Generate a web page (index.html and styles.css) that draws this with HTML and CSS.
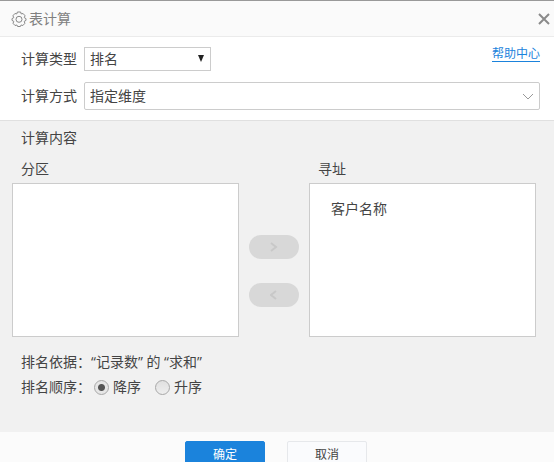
FILE: index.html
```html
<!DOCTYPE html>
<html lang="zh-CN">
<head>
  <meta charset="UTF-8" />
  <meta name="viewport" content="width=device-width, initial-scale=1" />
  <title>表计算</title>
  <link rel="stylesheet" href="styles.css">
</head>
<body>
  <form class="dialog">
    <header class="header">
      <svg class="gear" viewBox="0 0 16 16" width="16" height="16">
        <path d="M6.4 1h3.2l.6 1.9 1.9-.4 2 2.3-.9 1.8 1.8 1v1.8l-1.8 1 .7 1.9-2 2.2-1.8-.5-.7 1.5H6.6L5.9 14l-1.900.5-2-2.200.8-1.900-1.800-1V7.600l1.800-1-.900-1.800 2-2.300 1.900.400z" />
        <circle cx="8" cy="8.300" r="3" />
      </svg>
      <h1 class="title">表计算</h1>
      <button type="button" class="close" aria-label="关闭">
        <svg viewBox="0 0 12 12" width="12" height="12"><path d="M1 1l10 10M11 1L1 11" /></svg>
      </button>
    </header>

    <section class="settings">
      <div class="row">
        <label for="calcType">计算类型</label>
        <div class="select type">
          <select id="calcType">
            <option>排名</option>
          </select>
          <svg class="arrow" viewBox="0 0 6 7" width="6" height="7"><path d="M0 0h6L3 7z" /></svg>
        </div>
        <a class="help" href="#">帮助中心</a>
      </div>
      <div class="row">
        <label for="calcMode">计算方式</label>
        <div class="select mode">
          <select id="calcMode">
            <option>指定维度</option>
          </select>
          <svg class="chevron" viewBox="0 0 12 8" width="12" height="8"><path d="M1 1l5 5 5-5" /></svg>
        </div>
      </div>
    </section>

    <section class="content">
      <h2 class="subtitle">计算内容</h2>
      <div class="transfer">
        <div class="panel">
          <h3 class="panel-title">分区</h3>
          <ul class="list"></ul>
        </div>
        <div class="moves">
          <button type="button" class="move" disabled aria-label="右移">
            <svg viewBox="0 0 8 10" width="8" height="10"><path d="M1 1l5 4-5 4" /></svg>
          </button>
          <button type="button" class="move" disabled aria-label="左移">
            <svg viewBox="0 0 8 10" width="8" height="10"><path d="M6 1L1 5l5 4" /></svg>
          </button>
        </div>
        <div class="panel">
          <h3 class="panel-title">寻址</h3>
          <ul class="list">
            <li>客户名称</li>
          </ul>
        </div>
      </div>
      <div class="rank">
        <p class="rank-row">排名依据：“记录数” 的 “求和”</p>
        <div class="rank-row" role="radiogroup" aria-label="排名顺序">
          <span class="rank-label">排名顺序：</span>
          <label class="radio"><input type="radio" name="order" checked>降序</label>
          <label class="radio"><input type="radio" name="order">升序</label>
        </div>
      </div>
    </section>

    <footer class="footer">
      <button type="submit" class="btn primary">确定</button>
      <button type="button" class="btn">取消</button>
    </footer>
  </form>
</body>
</html>
```

FILE: styles.css
```css
* {
  box-sizing: border-box;
}
body {
  margin: 0;
  height: 100vh;
  overflow: hidden;
  background: #fbfbfb;
  color: #444;
  font-family: "Open Sans", "Noto Sans CJK SC", sans-serif;
  font-size: 14px;
  line-height: 20px;
}
h1, h2, h3, p, ul {
  margin: 0;
  padding: 0;
  font-size: 14px;
  font-weight: 400;
}
button, select {
  font: inherit;
  color: inherit;
}
svg {
  fill: none;
}
.header {
  display: flex;
  align-items: center;
  height: 37px;
  padding: 0 4px 0 11px;
  border-top: 1px solid #999;
  border-bottom: 1px solid #ebebeb;
  background: #fafafa;
}
.gear {
  stroke: #888;
}
.title {
  flex: 1;
  margin-left: 2px;
  color: #808080;
}
.close {
  display: flex;
  padding: 0;
  border: none;
  background: none;
  stroke: #8a8a8a;
  stroke-width: 2;
}
.settings {
  display: flex;
  flex-direction: column;
  gap: 11px;
  padding: 10px 14px 10px 21px;
  border-bottom: 1px solid #e0e0e0;
  background: #fff;
}
.row {
  display: flex;
  align-items: center;
  gap: 7px;
}
.select {
  position: relative;
}
.select select {
  display: block;
  width: 100%;
  padding: 0 5px;
  border: 1px solid #ccc;
  background: #fff;
  appearance: none;
}
.type {
  width: 127px;
}
.type select {
  height: 24px;
}
.mode {
  flex: 1;
}
.mode select {
  height: 28px;
  border-radius: 2px;
}
.arrow {
  position: absolute;
  right: 7px;
  top: 8px;
  fill: #222;
  pointer-events: none;
}
.chevron {
  position: absolute;
  right: 6px;
  top: 11px;
  stroke: #999;
  pointer-events: none;
}
.help {
  align-self: flex-start;
  margin-left: auto;
  border-bottom: 1px solid #1b83dc;
  color: #1b83dc;
  font-size: 12px;
  line-height: 14px;
  text-decoration: none;
}
.content {
  padding: 7px 18px 35px 12px;
  background: #f1f1f1;
}
.subtitle, .panel-title {
  padding-left: 9px;
}
.transfer {
  display: grid;
  grid-template-columns: 1fr 50px 1fr;
  gap: 10px;
  margin-top: 11px;
}
.list {
  min-height: 154px;
  margin-top: 4px;
  padding: 15px 21px;
  border: 1px solid #ccc;
  background: #fff;
  list-style: none;
}
.moves {
  display: flex;
  flex-direction: column;
  gap: 24px;
  padding-top: 76px;
}
.move {
  display: flex;
  align-items: center;
  justify-content: center;
  height: 24px;
  padding: 0;
  border: none;
  border-radius: 12px;
  background: #d8d8d8;
  stroke: #c8c8c8;
  stroke-width: 2;
}
.rank {
  display: flex;
  flex-direction: column;
  gap: 5px;
  margin-top: 15px;
  padding-left: 9px;
}
.rank-row {
  display: flex;
  align-items: center;
}
.rank-label {
  margin-right: 3px;
}
.radio {
  display: flex;
  align-items: center;
  gap: 4px;
  margin-right: 14px;
}
.radio input {
  width: 15px;
  height: 15px;
  margin: 0;
  border: 1px solid #a8a8a8;
  border-radius: 50%;
  background: linear-gradient(#e0e0e0, #eee);
  appearance: none;
}
.radio input:checked {
  background: radial-gradient(circle, #555 3px, #e6e6e6 4px);
}
.footer {
  display: flex;
  justify-content: center;
  gap: 22px;
  padding: 9px 2px 9px 0;
}
.btn {
  width: 80px;
  height: 28px;
  padding: 0;
  border: 1px solid #e6e8eb;
  border-radius: 2px;
  background: #fafbfd;
  font-size: 12px;
  line-height: 12px;
}
.primary {
  border-color: #1b83dc;
  background: #1b83dc;
  color: #fff;
}
```
